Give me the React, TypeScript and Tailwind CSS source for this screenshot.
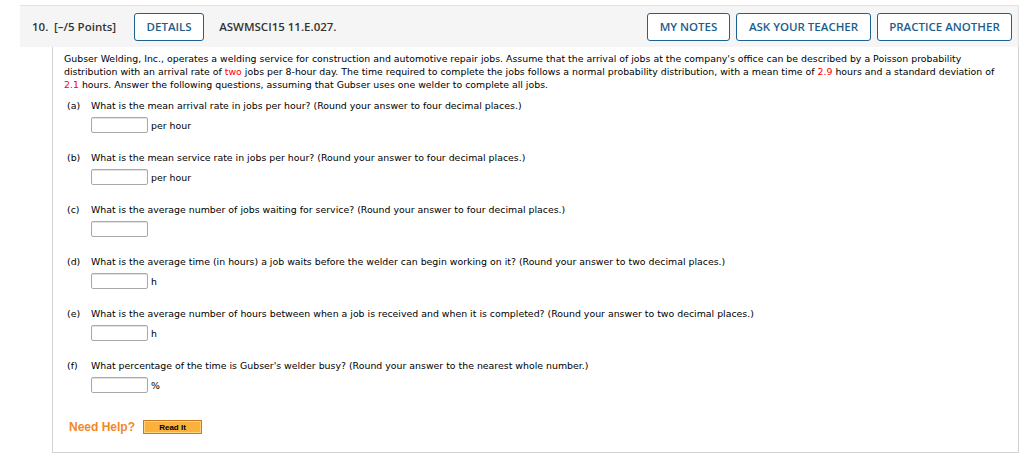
import React from "react";

const Q = [
  { l: "(a)", t: "What is the mean arrival rate in jobs per hour? (Round your answer to four decimal places.)", u: "per hour" },
  { l: "(b)", t: "What is the mean service rate in jobs per hour? (Round your answer to four decimal places.)", u: "per hour" },
  { l: "(c)", t: "What is the average number of jobs waiting for service? (Round your answer to four decimal places.)", u: "" },
  { l: "(d)", t: "What is the average time (in hours) a job waits before the welder can begin working on it? (Round your answer to two decimal places.)", u: "h" },
  { l: "(e)", t: "What is the average number of hours between when a job is received and when it is completed? (Round your answer to two decimal places.)", u: "h" },
  { l: "(f)", t: "What percentage of the time is Gubser's welder busy? (Round your answer to the nearest whole number.)", u: "%" },
];

function Btn({ children, w }: { children: React.ReactNode; w: string }) {
  return (
    <div
      className={`h-[28px] ${w} flex items-center justify-center border border-[#1d6292] rounded-[3px] bg-white text-[#1d5d8c] text-[11.5px] font-semibold`}
    >
      {children}
    </div>
  );
}

export default function App() {
  return (
    <div className="w-[1024px] h-[459px] bg-white pt-[5px] pl-[20px] pr-[5px] overflow-hidden">
      <div
        className="h-[42px] bg-[#f5f5f5] border-t border-r border-[#e2e2e2] flex items-center pl-[12px] pr-[6px] text-[#333] text-[11.5px] font-semibold"
        style={{ fontFamily: '"Open Sans", sans-serif' }}
      >
        <span className="w-[22px]">10.</span>
        <span>[–/5 Points]</span>
        <div className="ml-[18px]">
          <Btn w="w-[70px]">DETAILS</Btn>
        </div>
        <span className="ml-[15px]">ASWMSCI15 11.E.027.</span>
        <div className="ml-auto flex gap-[6px]">
          <Btn w="w-[83px]">MY NOTES</Btn>
          <Btn w="w-[135px]">ASK YOUR TEACHER</Btn>
          <Btn w="w-[135px]">PRACTICE ANOTHER</Btn>
        </div>
      </div>
      <div
        className="ml-[32px] h-[406px] border-l border-b border-r border-[#d3d3d3] pl-[11px] pt-[5px] pr-[14px] text-black text-[9.4px] leading-[13px]"
        style={{ fontFamily: '"DejaVu Sans", Verdana, sans-serif' }}
      >
        <p>
          Gubser Welding, Inc., operates a welding service for construction and automotive repair jobs. Assume that the arrival of jobs at the company's office can be described by a Poisson probability distribution with an arrival rate of{" "}
          <span className="text-[#ff0000]">two</span> jobs per 8-hour day. The time required to complete the jobs follows a normal probability distribution, with a mean time of{" "}
          <span className="text-[#ff0000]">2.9</span> hours and a standard deviation of{" "}
          <span className="text-[#ff0000]">2.1</span> hours. Answer the following questions, assuming that Gubser uses one welder to complete all jobs.
        </p>
        <div className="mt-[8px] flex flex-col gap-[18px] pl-[3px]">
          {Q.map((q) => (
            <div key={q.l}>
              <div className="flex h-[13px]">
                <span className="w-[24px]">{q.l}</span>
                <span>{q.t}</span>
              </div>
              <div className="mt-[5px] flex items-center h-[16px] pl-[24px]">
                <div className="w-[57px] h-[16px] border border-[#a9a9a9] rounded-[2px] bg-white shadow-[inset_0_1px_1px_rgba(0,0,0,0.12)]" />
                {q.u && <span className="ml-[3px]">{q.u}</span>}
              </div>
            </div>
          ))}
        </div>
        <div className="mt-[27px] ml-[5px] flex items-center" style={{ fontFamily: '"Liberation Sans", Arial, sans-serif' }}>
          <span className="text-[#f0892a] text-[12px] font-bold">Need Help?</span>
          <div className="ml-[8px] w-[59px] h-[14px] border border-[#c97a1a] bg-[#fbb13c] flex items-center justify-center text-[8px] font-bold text-black shadow-[inset_0_0_0_1px_#fdd27f]">
            Read It
          </div>
        </div>
      </div>
    </div>
  );
}
